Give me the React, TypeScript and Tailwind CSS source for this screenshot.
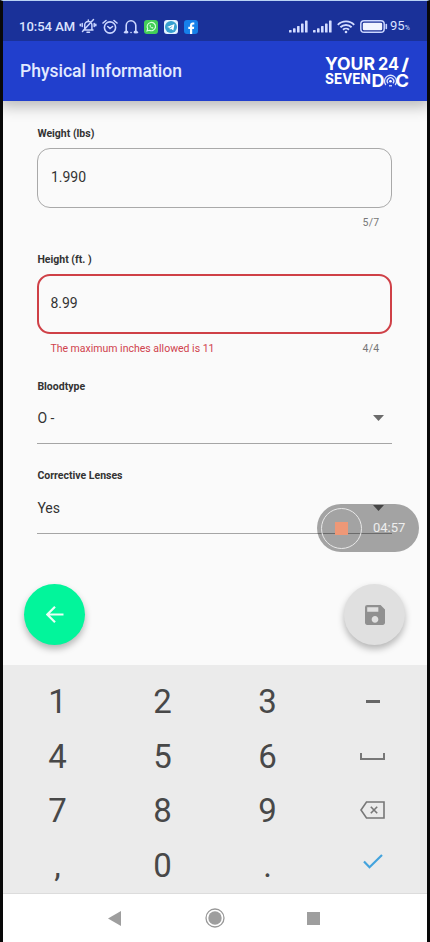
import React from "react";

function Signal() {
  return (
    <svg width="19" height="13" viewBox="0 0 19 13" fill="#d3dcff">
      <rect x="0" y="10" width="2.6" height="2.5" rx=".6" />
      <rect x="4" y="8.3" width="2.6" height="4.2" rx=".6" />
      <rect x="8" y="6" width="2.6" height="6.5" rx=".6" />
      <rect x="12" y="3.5" width="2.6" height="9" rx=".6" />
      <rect x="16" y="0.5" width="2.6" height="12" rx=".6" />
    </svg>
  );
}

function StatusBar() {
  return (
    <div className="z-20 flex h-10 shrink-0 items-center bg-[#1a3199] pt-[11px] text-[#dbe3ff]">
      <span className="ml-4 w-[60px] whitespace-nowrap text-[13px] font-medium leading-4">10:54 AM</span>
      <svg className="-mt-px" width="18" height="16" viewBox="0 0 17 16" fill="none" stroke="#cbd6ff" strokeWidth="1.5" strokeLinecap="round">
        <path d="M4 12h9.500M5.200 11.500V7a3.600 3.600 0 0 1 7.200 0v4.500M7.500 14.300h2.500M14 1.500 3 13.500M8.800 2v1.200" />
        <path d="M2.700 5.500v3M.8 6.300v1.400M14.700 5.500v3M16.300 6.300v1.400" />
      </svg>
      <svg className="ml-[5px]" width="16" height="16" viewBox="0 0 16 16" fill="none" stroke="#cbd6ff" strokeWidth="1.6" strokeLinecap="round">
        <circle cx="8" cy="8.500" r="5.600" />
        <path d="m1 4 3-2.500M15 4l-3-2.500M5.800 7.500 8 9.500l2.500-2" />
      </svg>
      <svg className="ml-[5px]" width="16" height="16" viewBox="0 0 16 16" fill="none" stroke="#cbd6ff" strokeWidth="1.6" strokeLinecap="round">
        <path d="M3.200 12.500V6.600a4.800 4.800 0 0 1 9.600 0v5.900M1.500 13.500h3M11.500 13.500h3M8 13.500h.1" />
        <path d="M2.600 13h1.400M12 13h1.400" strokeWidth="2.600" />
      </svg>
      <svg className="ml-[5px]" width="14" height="14" viewBox="0 0 14 14">
        <rect width="14" height="14" rx="3" fill="#43cf58" />
        <path d="m3 11 .7-2.300a4.200 4.200 0 1 1 1.700 1.600z" fill="none" stroke="#d9ffdf" strokeWidth="1.100" />
        <path d="M5.600 5c-.4 1.700 1.700 3.700 3.400 3.500l.4-.9-1.200-.6-.5.500-1.200-1.300.4-.5-.5-1z" fill="#d9ffdf" />
      </svg>
      <svg className="ml-1.5" width="14" height="14" viewBox="0 0 14 14">
        <rect width="14" height="14" rx="3" fill="#e4f3ff" />
        <circle cx="7" cy="7" r="6" fill="#369fd0" />
        <path d="m3 6.900 7.500-3-1.200 6.500-2.300-1.600-1.100 1-.3-2z" fill="#fff" />
        <path d="m5.700 7.700 3.300-2.300-2.400 2.800z" fill="#369fd0" />
      </svg>
      <svg className="ml-1.5" width="14" height="14" viewBox="0 0 14 14">
        <rect width="14" height="14" rx="3" fill="#1680ea" />
        <path d="M6 14V9H4.300V6.800H6V5.400C6 3.500 7.100 2.500 8.800 2.500l1.500.1v2h-1c-.8 0-1.100.4-1.100 1v1.200h2L9.900 9H8.200v5z" fill="#fff" />
      </svg>
      <div className="ml-auto flex items-center">
        <Signal />
        <span className="w-[5px]" />
        <Signal />
        <svg className="ml-[5px]" width="18" height="14" viewBox="0 0 18 14" fill="none" stroke="#d3dcff" strokeWidth="1.900">
          <path d="M.8 4.800a11.600 11.600 0 0 1 16.400 0M3.400 7.300a8 8 0 0 1 11.200 0M6 9.800a4.300 4.300 0 0 1 6 0" />
          <circle cx="9" cy="12" r="1.300" fill="#d3dcff" stroke="none" />
        </svg>
        <svg className="ml-[5px]" width="28" height="13" viewBox="0 0 28 13">
          <rect x=".8" y=".8" width="23.400" height="11.400" rx="3.300" fill="none" stroke="#cbd6ff" strokeWidth="1.500" />
          <rect x="2.800" y="2.800" width="19.400" height="7.400" rx="1.300" fill="#f1f4ff" />
          <path d="M26.300 4.500v4" stroke="#cbd6ff" strokeWidth="1.600" strokeLinecap="round" />
        </svg>
        <span className="ml-[2px] mr-4 flex w-[21px] items-baseline whitespace-nowrap text-[13px] leading-4">
          95<span className="text-[7px]">%</span>
        </span>
      </div>
    </div>
  );
}

function Logo() {
  return (
    <svg className="mr-[17px] overflow-visible font-['Inter',sans-serif]" width="86" height="36" viewBox="0 0 86 36" fill="#fff">
      <text x="1" y="17" fontSize="17.500" fontWeight="700" textLength="50" lengthAdjust="spacingAndGlyphs">YOUR</text>
      <text x="54" y="17" fontSize="17.500" fontWeight="700" textLength="21" lengthAdjust="spacingAndGlyphs">24</text>
      <text x="77.500" y="16.500" fontSize="16.500" fontWeight="800" textLength="7.500" lengthAdjust="spacingAndGlyphs">/</text>
      <text x="1" y="31" fontSize="14.500" fontWeight="700" textLength="46" lengthAdjust="spacingAndGlyphs">SEVEN</text>
      <text x="47.500" y="34" fontSize="17.500" fontWeight="700" textLength="13" lengthAdjust="spacingAndGlyphs">D</text>
      <g fill="none" stroke="#dce5ff" strokeWidth="1.300">
        <path d="M61.800 32a6 6 0 1 1 9.400 0M64 30.300a3.300 3.300 0 1 1 5 0" />
        <circle cx="66.500" cy="28.300" r="1.300" fill="#fff" stroke="none" />
        <path d="M65 32.800h3" />
      </g>
      <text x="71.500" y="34" fontSize="17.500" fontWeight="700" textLength="13.500" lengthAdjust="spacingAndGlyphs">C</text>
    </svg>
  );
}

function Label({ children }: { children: React.ReactNode }) {
  return <div className="h-3.5 whitespace-nowrap text-[10.500px] font-bold leading-[14px] text-[#333]">{children}</div>;
}

function Select({ value }: { value: string }) {
  return (
    <div className="flex h-[36px] items-start justify-between border-b border-[#a5a5a5] pr-2">
      <span className="text-[14px] leading-5 text-[#333]">{value}</span>
      <svg className="mt-[7px]" width="11" height="6" viewBox="0 0 11 6">
        <path d="M0 0h11L5.500 6z" fill="#6b6b6b" />
      </svg>
    </div>
  );
}

function Key({ children }: { children: React.ReactNode }) {
  return <div className="flex items-center justify-center">{children}</div>;
}

export default function App() {
  return (
    <div className="relative flex h-[942px] w-[430px] flex-col overflow-hidden border-x-[3px] border-t border-x-[#080808] border-t-[#b8d2f5] bg-[#fafafa] font-['Roboto',sans-serif]">
      <StatusBar />
      <header className="z-10 flex h-[60px] shrink-0 items-center justify-between bg-[#213fcd] shadow-[0_2px_14px_3px_rgba(0,0,0,0.28)]">
        <h1 className="ml-[17px] whitespace-nowrap text-[17.500px] font-medium leading-6 text-[#e3eaff]">Physical Information</h1>
        <Logo />
      </header>

      <main className="flex h-[564px] shrink-0 flex-col pl-[34.400px] pr-[34.600px] pt-[26px]">
        <Label>Weight (lbs)</Label>
        <div className="mt-[7px] flex h-[60px] items-center rounded-[13px] border border-[#a9a9a9] pl-[12.500px] text-[14px] leading-5 text-[#333]">
          <span className="-mt-0.5">1.990</span>
        </div>
        <div className="mt-[7px] flex h-3.5 justify-end pr-[13px] text-[10.500px] leading-[15px] tracking-[0.25px] text-[#777]">5/7</div>

        <div className="mt-6"><Label>Height (ft. )</Label></div>
        <div className="mt-[7px] flex h-[60px] items-center rounded-[13px] border-2 border-[#cf4047] pl-[11px] text-[14px] leading-5 text-[#333]">
          <span className="-mt-0.5">8.99</span>
        </div>
        <div className="mt-[7px] flex h-3.5 items-center justify-between whitespace-nowrap pl-[13px] pr-[13px] text-[10.500px] leading-[15px]">
          <span className="pt-px text-[#d0424d]">The maximum inches allowed is 11</span>
          <span className="pt-px tracking-[0.25px] text-[#777]">4/4</span>
        </div>

        <div className="mt-[25px]"><Label>Bloodtype</Label></div>
        <div className="mt-[14px]"><Select value="O -" /></div>
        <div className="mt-[25px]"><Label>Corrective Lenses</Label></div>
        <div className="mt-[15px]"><Select value="Yes" /></div>

        <div className="-ml-[13px] -mr-[13px] mt-[50px] flex justify-between">
          <button className="flex size-[61px] items-center justify-center rounded-full bg-[#02f59b] shadow-[0_4px_7px_rgba(0,0,0,0.28)]">
            <svg width="18" height="17" viewBox="0 0 18 17" fill="none" stroke="#e9fff6" strokeWidth="2.2">
              <path d="M17.500 8.500H2M9 .8 1.300 8.500 9 16.200" />
            </svg>
          </button>
          <button className="flex size-[61px] items-center justify-center rounded-full bg-[#e0e0e0] shadow-[0_4px_7px_rgba(0,0,0,0.28)]">
            <svg width="20" height="20" viewBox="3 3 18 18" fill="#909090">
              <path d="M17 3H5a2 2 0 0 0-2 2v14c0 1.100.9 2 2 2h14c1.100 0 2-.9 2-2V7l-4-4zm-5 16c-1.660 0-3-1.340-3-3s1.340-3 3-3 3 1.340 3 3-1.340 3-3 3zm3-10H5V5h10v4z" />
            </svg>
          </button>
        </div>
      </main>

      <section className="h-[228px] shrink-0 bg-[#ebebeb] pt-[9.500px]">
        <div className="ml-[2px] grid w-[420px] grid-cols-[repeat(4,105px)] grid-rows-[repeat(4,54.500px)] text-[33px] leading-none text-[#484848]">
          <Key>1</Key><Key>2</Key><Key>3</Key>
          <Key><span className="h-[3px] w-[14px] bg-[#666]" /></Key>
          <Key>4</Key><Key>5</Key><Key>6</Key>
          <Key>
            <svg width="25" height="7" viewBox="0 0 25 7" fill="none" stroke="#777" strokeWidth="2"><path d="M1 0v6h23V0" /></svg>
          </Key>
          <Key>7</Key><Key>8</Key><Key>9</Key>
          <Key>
            <svg className="-mt-0.5" width="25" height="18" viewBox="0 0 25 18" fill="none" stroke="#777" strokeWidth="1.600">
              <path d="M6.500 1H24v16H6.500L1 9zM10.800 5.700l6.400 6.600M17.200 5.700l-6.400 6.600" />
            </svg>
          </Key>
          <Key>,</Key><Key>0</Key><Key>.</Key>
          <Key>
            <svg className="-mt-2" width="20" height="15" viewBox="0 0 20 15" fill="none" stroke="#43a3dd" strokeWidth="2.200"><path d="m1 7.500 5.500 5.700L19 1" /></svg>
          </Key>
        </div>
      </section>

      <nav className="flex h-[49px] shrink-0 items-center border-t border-[#dcdcdc] bg-white">
        <svg className="ml-[105px]" width="13" height="15" viewBox="0 0 13 15"><path d="M13 0v15L0 7.500z" fill="#9e9e9e" /></svg>
        <svg className="ml-[84px]" width="20" height="20" viewBox="0 0 20 20">
          <circle cx="10" cy="10" r="9" fill="none" stroke="#999" strokeWidth="1.300" />
          <circle cx="10" cy="10" r="6.700" fill="#9e9e9e" />
        </svg>
        <span className="ml-[82px] size-[13px] bg-[#9e9e9e]" />
      </nav>

      <div className="absolute left-[314px] top-[503px] z-20 flex h-12 w-[102px] items-center rounded-full bg-black/35">
        <span className="ml-[4px] flex size-[41px] items-center justify-center rounded-full border-[1.500px] border-[#e8e8e8]">
          <span className="size-[13px] bg-[#ee9877]" />
        </span>
        <span className="ml-[11px] whitespace-nowrap text-[13px] leading-4 text-[#eee]">04:57</span>
      </div>
    </div>
  );
}
